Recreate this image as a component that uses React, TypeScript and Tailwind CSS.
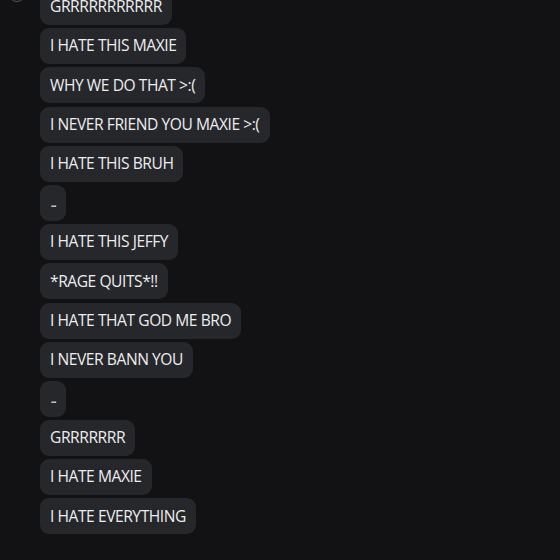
const messages = [
  "GRRRRRRRRRRR",
  "I HATE THIS MAXIE",
  "WHY WE DO THAT >:(",
  "I NEVER FRIEND YOU MAXIE >:(",
  "I HATE THIS BRUH",
  "…",
  "I HATE THIS JEFFY",
  "*RAGE QUITS*!!",
  "I HATE THAT GOD ME BRO",
  "I NEVER BANN YOU",
  "…",
  "GRRRRRRR",
  "I HATE MAXIE",
  "I HATE EVERYTHING",
];

function Bubble({ text }: { text: string }) {
  if (text === "…") {
    return (
      <div className="h-[36px] w-[26px] rounded-[9px] bg-[#26272b] flex items-end justify-center pb-[12px]">
        <span className="text-[12px] leading-none text-[#ececee] tracking-[-1.5px]">...</span>
      </div>
    );
  }
  return (
    <div className="h-[36px] rounded-[9px] bg-[#26272b] px-[10px] flex items-center">
      <span className="text-[15.6px] leading-none tracking-[-0.45px] text-[#ededef] whitespace-nowrap">{text}</span>
    </div>
  );
}

export default function App() {
  return (
    <div
      className="relative w-[560px] h-[560px] overflow-hidden bg-[#121215]"
      style={{ fontFamily: '"Open Sans", "Noto Sans", sans-serif' }}
    >
      <div className="absolute left-[8px] top-[-16px] w-[18px] h-[18px] rounded-full border-[1.5px] border-[#55565c]" />
      <div className="flex flex-col items-start gap-[3.2px] pl-[40px] mt-[-11px]">
        {messages.map((m, i) => (
          <Bubble key={i} text={m} />
        ))}
      </div>
    </div>
  );
}
